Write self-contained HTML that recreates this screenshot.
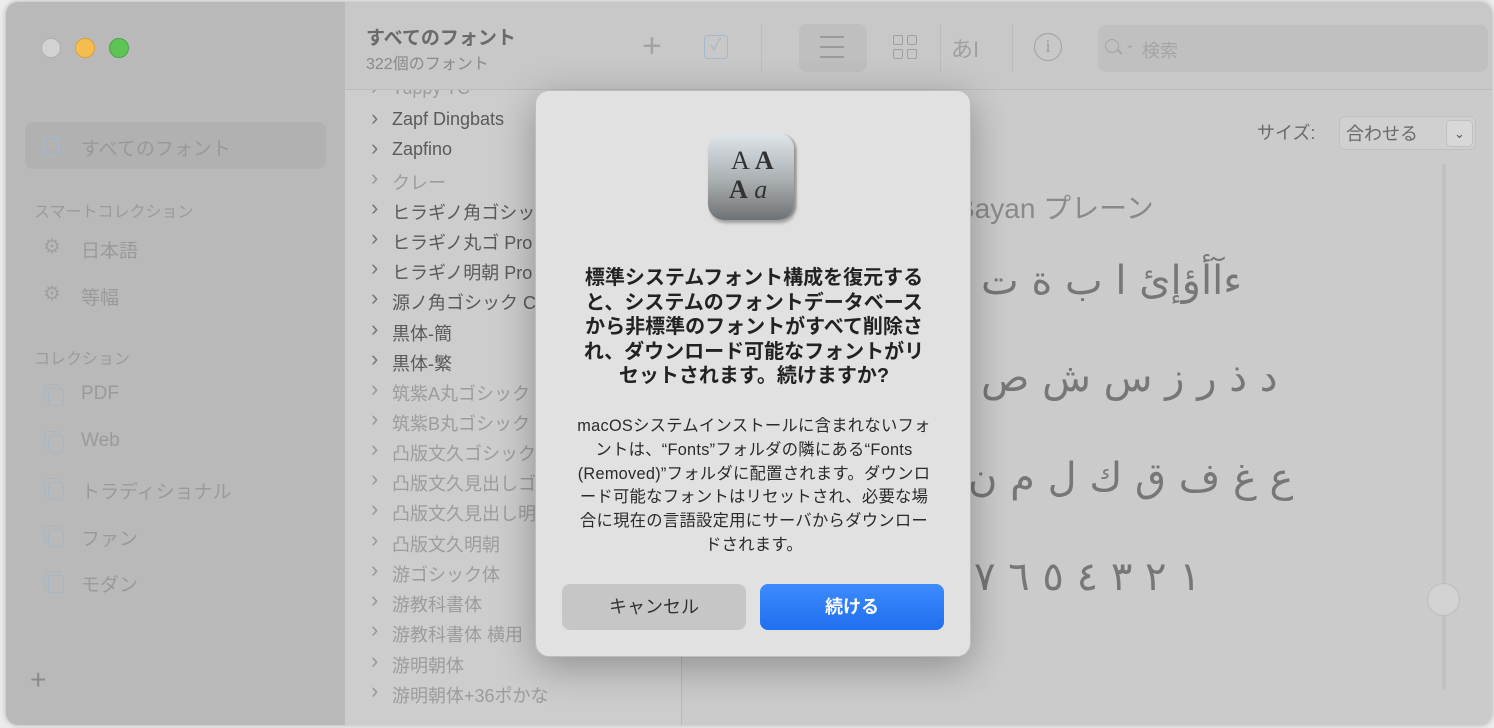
<!DOCTYPE html>
<html><head><meta charset="utf-8"><style>
*{margin:0;padding:0;box-sizing:border-box}
body{width:1494px;height:728px;background:#ececec;font-family:"Liberation Sans","Noto Sans CJK JP",sans-serif;position:relative;overflow:hidden}
.win{position:absolute;left:6px;top:2px;width:1486px;height:723px;border-radius:12px;background:#cbcbcb;overflow:hidden;box-shadow:0 0 6px rgba(0,0,0,.25)}
.side{position:absolute;left:0;top:0;width:339px;height:100%;background:#b9b9b9}
.tb{position:absolute;left:339px;top:0;right:0;height:88px;background:#c8c8c8;border-bottom:1px solid #bcbcbc}
.list{position:absolute;left:339px;top:88px;width:337px;bottom:0;background:#cdcdcd;border-right:1px solid #b8b8b8;overflow:hidden}
.abs{position:absolute;white-space:nowrap}
.dot{position:absolute;top:36px;width:20px;height:20px;border-radius:50%}
.li{position:absolute;left:47px;font-size:18px;color:#5a5a5a;white-space:nowrap}
.li.g{color:#9c9c9c}
.li:before{content:"›";position:absolute;left:-21px;top:-4px;font-size:22px;color:#777}
.li.g:before{color:#999}
.sb{position:absolute;left:75px;font-size:19px;color:#9a9a9a}
.ic{position:absolute;left:38px;width:16px;height:19px;border:1.5px solid #a9b6bf;border-radius:3px}
.ic:after{content:"";position:absolute;left:3px;top:3px;width:14px;height:16px;border:1.5px solid #a9b6bf;border-radius:3px;background:#b9b9b9}
.ar{position:absolute;font-family:"DejaVu Sans",sans-serif;color:#777;font-size:40px;direction:rtl}
.dlg{position:absolute;left:535px;top:90px;width:436px;height:567px;background:#e1e1e1;border-radius:14px;border:1px solid #bdbdbd;box-shadow:0 10px 40px rgba(0,0,0,.3);text-align:center}
.btn{position:absolute;top:493px;width:184px;height:46px;border-radius:8px;font-size:18px;line-height:46px}
</style></head><body>
<div class="win">
 <div class="side">
  <div class="dot" style="left:35px;background:#d2d2d2;border:1px solid #b0b0b0"></div>
  <div class="dot" style="left:69px;background:#f5bd4f;border:1px solid #d9a23c"></div>
  <div class="dot" style="left:103px;background:#5ec454;border:1px solid #4aa742"></div>
  <div style="position:absolute;left:19px;top:120px;width:301px;height:47px;border-radius:8px;background:#b1b1b1"></div>
  <div style="position:absolute;left:38px;top:134px;width:15px;height:20px;border:1.5px solid #a6b8cc;border-radius:2px;font-size:11px;color:#a6b8cc;text-align:center;line-height:17px">F</div>
  <div class="sb" style="top:132px;color:#999">すべてのフォント</div>
  <div class="abs" style="left:28px;top:196px;font-size:16px;color:#9a9a9a">スマートコレクション</div>
  <div class="abs" style="left:37px;top:232px;font-size:20px;color:#a0a0a0">⚙</div><div class="sb" style="top:234px">日本語</div>
  <div class="abs" style="left:37px;top:279px;font-size:20px;color:#a0a0a0">⚙</div><div class="sb" style="top:281px">等幅</div>
  <div class="abs" style="left:28px;top:343px;font-size:16px;color:#9a9a9a">コレクション</div>
  <div class="ic" style="top:382px"></div><div class="sb" style="top:381px">PDF</div>
  <div class="ic" style="top:429px"></div><div class="sb" style="top:428px">Web</div>
  <div class="ic" style="top:476px"></div><div class="sb" style="top:475px">トラディショナル</div>
  <div class="ic" style="top:523px"></div><div class="sb" style="top:522px">ファン</div>
  <div class="ic" style="top:569px"></div><div class="sb" style="top:568px">モダン</div>
  <div class="abs" style="left:24px;top:662px;font-size:28px;color:#8a8a8a;font-weight:300">+</div>
 </div>
 <div class="tb">
  <div class="abs" style="left:21px;top:21px;font-size:19px;font-weight:bold;color:#6a6a6a">すべてのフォント</div>
  <div class="abs" style="left:21px;top:48px;font-size:16px;color:#8a8a8a">322個のフォント</div>
  <div class="abs" style="left:297px;top:24px;font-size:34px;color:#a3a3a3;font-weight:200;line-height:40px">+</div>
  <div style="position:absolute;left:359px;top:33px;width:24px;height:24px;border:1.5px solid #a6b8cc;border-radius:3px;color:#a6b8cc;font-size:16px;text-align:center;line-height:20px">✓</div>
  <div style="position:absolute;left:416px;top:22px;width:1px;height:48px;background:#bcbcbc"></div>
  <div style="position:absolute;left:454px;top:22px;width:68px;height:48px;border-radius:8px;background:#bfbfbf"></div>
  <div style="position:absolute;left:475px;top:34px;width:24px;height:2px;background:#9a9a9a;box-shadow:0 10px 0 #9a9a9a,0 20px 0 #9a9a9a"></div>
  <div style="position:absolute;left:548px;top:33px;width:10px;height:10px;border:1.5px solid #a0a0a0;border-radius:2px"></div>
  <div style="position:absolute;left:562px;top:33px;width:10px;height:10px;border:1.5px solid #a0a0a0;border-radius:2px"></div>
  <div style="position:absolute;left:548px;top:47px;width:10px;height:10px;border:1.5px solid #a0a0a0;border-radius:2px"></div>
  <div style="position:absolute;left:562px;top:47px;width:10px;height:10px;border:1.5px solid #a0a0a0;border-radius:2px"></div>
  <div style="position:absolute;left:595px;top:22px;width:1px;height:48px;background:#bcbcbc"></div>
  <div class="abs" style="left:606px;top:30px;font-size:22px;color:#a0a0a0">あ<span style="font-weight:200">I</span></div>
  <div style="position:absolute;left:667px;top:22px;width:1px;height:48px;background:#bcbcbc"></div>
  <div style="position:absolute;left:689px;top:31px;width:28px;height:28px;border:1.5px solid #a0a0a0;border-radius:50%;text-align:center;font-family:'Liberation Serif',serif;color:#a0a0a0;font-size:18px;line-height:25px">i</div>
  <div style="position:absolute;left:753px;top:23px;width:390px;height:47px;border-radius:8px;background:#c0c0c0"></div>
  <div class="abs" style="left:760px;top:37px;width:14px;height:14px;border:1.5px solid #a5a5a5;border-radius:50%"></div>
  <div class="abs" style="left:772px;top:49px;width:6px;height:1.5px;background:#a5a5a5;transform:rotate(45deg)"></div>
  <div class="abs" style="left:780px;top:36px;font-size:11px;color:#a0a0a0">⌄</div>
  <div class="abs" style="left:797px;top:35px;font-size:18px;color:#a5a5a5">検索</div>
 </div>
 <div class="list">
  <div class="li g" style="top:-12px">Tuppy TC</div>
  <div class="li" style="top:19px;">Zapf Dingbats</div>
  <div class="li" style="top:49px">Zapfino</div>
  <div class="li g" style="top:79px">クレー</div>
  <div class="li" style="top:109px">ヒラギノ角ゴシック</div>
  <div class="li" style="top:139px">ヒラギノ丸ゴ Pro</div>
  <div class="li" style="top:169px">ヒラギノ明朝 Pro</div>
  <div class="li" style="top:199px">源ノ角ゴシック Code</div>
  <div class="li" style="top:230px">黒体-簡</div>
  <div class="li" style="top:260px">黒体-繁</div>
  <div class="li g" style="top:290px">筑紫A丸ゴシック</div>
  <div class="li g" style="top:320px">筑紫B丸ゴシック</div>
  <div class="li g" style="top:350px">凸版文久ゴシック</div>
  <div class="li g" style="top:380px">凸版文久見出しゴ</div>
  <div class="li g" style="top:410px">凸版文久見出し明朝</div>
  <div class="li g" style="top:441px">凸版文久明朝</div>
  <div class="li g" style="top:471px">游ゴシック体</div>
  <div class="li g" style="top:501px">游教科書体</div>
  <div class="li g" style="top:531px">游教科書体 横用</div>
  <div class="li g" style="top:562px">游明朝体</div>
  <div class="li g" style="top:592px">游明朝体+36ポかな</div>
 </div>
 <div class="abs" style="left:1251px;top:117px;font-size:18px;color:#6a6a6a">サイズ:</div>
 <div style="position:absolute;left:1333px;top:114px;width:137px;height:34px;border-radius:6px;background:#d0d0d0;border:1px solid #c0c0c0"></div>
 <div class="abs" style="left:1340px;top:118px;font-size:18px;color:#6a6a6a">合わせる</div>
 <div style="position:absolute;left:1440px;top:118px;width:27px;height:27px;border-radius:5px;background:#d8d8d8;border:1px solid #c0c0c0;text-align:center;font-size:13px;color:#555;line-height:25px">⌄</div>
 <div style="position:absolute;left:1436px;top:162px;width:4px;height:526px;border-radius:2px;background:#c2c2c2"></div>
 <div style="position:absolute;left:1421px;top:581px;width:33px;height:33px;border-radius:50%;background:#d2d2d2;border:1px solid #bdbdbd"></div>
 <div class="abs" style="left:950px;top:185px;font-size:28px;color:#8a8a8a">Bayan プレーン</div>
 <div class="ar" style="left:975px;top:256px">ءآأؤإئ ا ب ة ت</div>
 <div class="ar" style="left:975px;top:353px">د ذ ر ز س ش ص</div>
 <div class="ar" style="left:962px;top:453px">ع غ ف ق ك ل م ن</div>
 <div class="ar" style="left:968px;top:552px">١ ٢ ٣ ٤ ٥ ٦ ٧</div>
</div>
<div class="dlg">
 <div style="position:absolute;left:172px;top:42px;width:86px;height:87px;border-radius:16px;background:linear-gradient(#dfe6ea,#a9aeb1 55%,#6f7274);box-shadow:2px 3px 3px rgba(0,0,0,.3),4px 0 0 -1px #c8c8c8"></div>
 <div class="abs" style="left:195px;top:55px;font-family:'Liberation Serif',serif;font-size:26px;color:#333;line-height:30px">A <b>A</b></div>
 <div class="abs" style="left:193px;top:84px;font-family:'Liberation Serif',serif;font-size:26px;color:#333;line-height:30px"><b>A</b> <i>a</i></div>
 <div style="position:absolute;left:43px;top:175px;width:350px;font-size:20px;font-weight:bold;color:#222;line-height:24.5px">標準システムフォント構成を復元すると、システムのフォントデータベースから非標準のフォントがすべて削除され、ダウンロード可能なフォントがリセットされます。続けますか?</div>
 <div style="position:absolute;left:36px;top:324px;width:364px;font-size:16.3px;color:#2a2a2a;line-height:23.8px;letter-spacing:0.3px">macOSシステムインストールに含まれないフォントは、“Fonts”フォルダの隣にある“Fonts (Removed)”フォルダに配置されます。ダウンロード可能なフォントはリセットされ、必要な場合に現在の言語設定用にサーバからダウンロードされます。</div>
 <div class="btn" style="left:26px;background:#c6c6c6;color:#333">キャンセル</div>
 <div class="btn" style="left:224px;background:linear-gradient(#3d8bfd,#1f6ff0);color:#fff;font-weight:bold">続ける</div>
</div>
</body></html>
